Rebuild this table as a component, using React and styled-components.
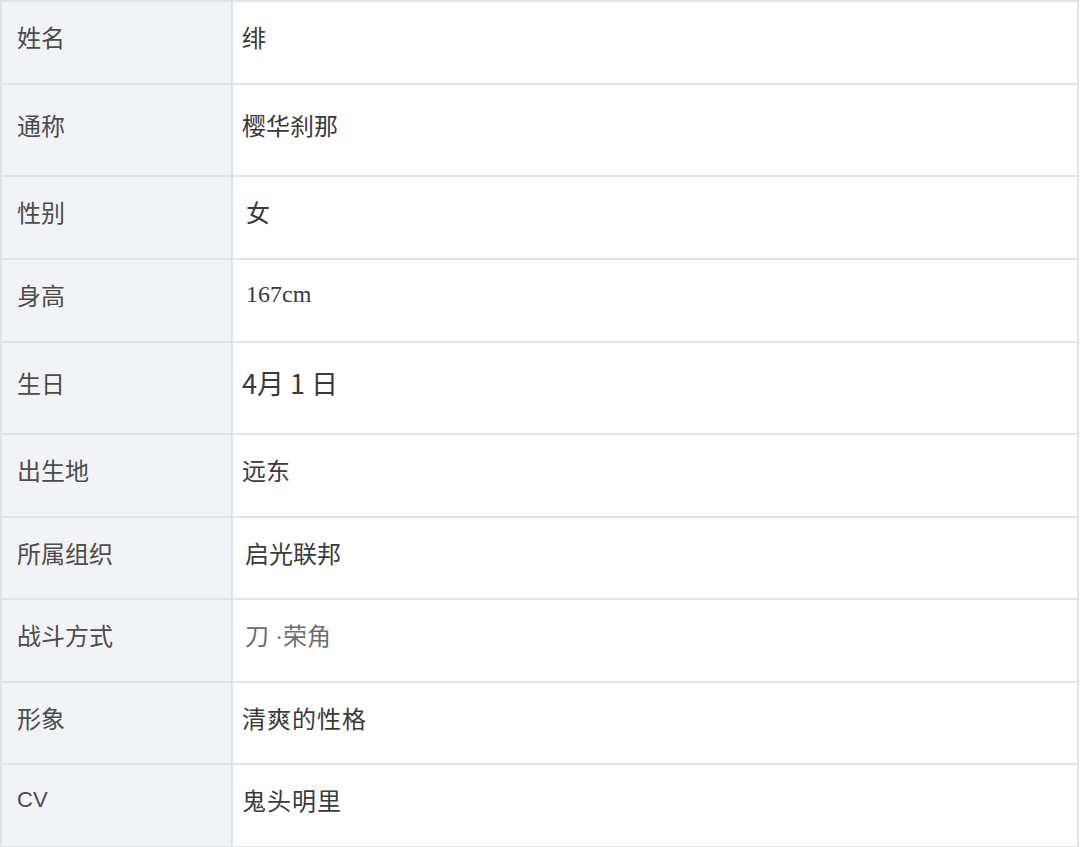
import styled, { createGlobalStyle } from "styled-components";

const GlobalStyle = createGlobalStyle`
  html, body {
    margin: 0;
    padding: 0;
    background: #ffffff;
  }
  body {
    font-family: "Noto Sans CJK SC", "Noto Sans", sans-serif;
  }
`;

const rows = [
  { label: "姓名", value: "绯", h: 83 },
  { label: "通称", value: "樱华刹那", h: 92 },
  { label: "性别", value: "女", h: 83, indent: 4 },
  { label: "身高", value: "167cm", h: 83, serif: true, indent: 4 },
  { label: "生日", value: "4月 1 日", h: 92, big: true },
  { label: "出生地", value: "远东", h: 83 },
  { label: "所属组织", value: "启光联邦", h: 82, indent: 3 },
  { label: "战斗方式", value: "刀 ·荣角", h: 83, muted: true, indent: 3 },
  { label: "形象", value: "清爽的性格", h: 82, spaced: true },
  { label: "CV", value: "鬼头明里", h: 83, latinLabel: true, spaced: true },
];

const App = () => {
  return (
    <>
      <GlobalStyle />
      <Table>
        {rows.map((r) => (
          <Row key={r.label} $h={r.h}>
            <Label $latin={r.latinLabel}>{r.label}</Label>
            <Value
              $serif={r.serif}
              $big={r.big}
              $muted={r.muted}
              $spaced={r.spaced}
              $indent={r.indent}
            >
              {r.value}
            </Value>
          </Row>
        ))}
      </Table>
    </>
  );
};

const Table = styled.div`
  width: 1079px;
  border-top: 2px solid #dce4ec;
  border-left: 2px solid #dce4ec;
  box-sizing: border-box;
`;

const Row = styled.div`
  display: grid;
  grid-template-columns: 231px 1fr;
  height: ${(p) => p.$h}px;
  box-sizing: border-box;
  border-bottom: 2px solid #dce4ec;
  border-right: 2px solid #dce4ec;
`;

const Label = styled.div`
  display: flex;
  align-items: center;
  padding: 0 0 12px 15px;
  background: #f2f3f6;
  border-right: 2px solid #dce4ec;
  color: #4c4c4c;
  font-family: ${(p) =>
    p.$latin
      ? '"Liberation Sans", Arial, sans-serif'
      : '"Noto Sans CJK SC", sans-serif'};
  font-size: ${(p) => (p.$latin ? "22px" : "24px")};
`;

const Value = styled.div`
  display: flex;
  align-items: center;
  padding: 0 0 12px ${(p) => 9 + (p.$indent || 0)}px;
  background: #ffffff;
  color: ${(p) => (p.$muted ? "#6e6e6e" : "#3a3a3a")};
  font-family: ${(p) =>
    p.$serif
      ? '"Liberation Serif", "Times New Roman", serif'
      : p.$muted
      ? '"Liberation Serif", "Noto Sans CJK SC", serif'
      : '"Noto Sans CJK SC", sans-serif'};
  font-size: ${(p) => (p.$big ? "27px" : "24px")};
  letter-spacing: ${(p) => (p.$spaced ? "1px" : "0")};
  white-space: pre;
`;

export default App;
